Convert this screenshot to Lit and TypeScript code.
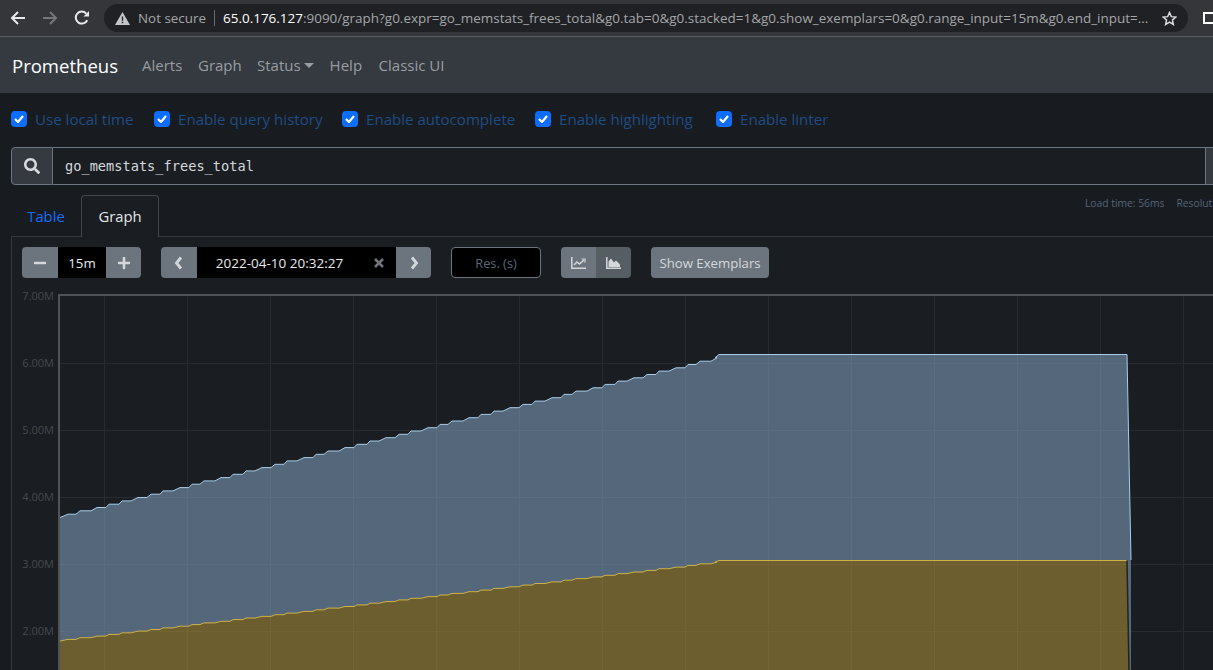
import { LitElement, html, css, svg } from "lit";
import { customElement } from "lit/decorators.js";

const FA = {
  search: ["0 0 512 512", "M505 442.7L405.3 343c-4.5-4.5-10.6-7-17-7H372c27.6-35.3 44-79.7 44-128C416 93.1 322.9 0 208 0S0 93.1 0 208s93.1 208 208 208c48.3 0 92.7-16.4 128-44v16.3c0 6.4 2.5 12.5 7 17l99.7 99.7c9.4 9.4 24.6 9.4 33.9 0l28.3-28.3c9.4-9.4 9.4-24.6.1-34zM208 336c-70.7 0-128-57.2-128-128 0-70.7 57.2-128 128-128 70.7 0 128 57.2 128 128 0 70.7-57.2 128-128 128z"],
  plus: ["0 0 448 512", "M416 208H272V64c0-17.67-14.33-32-32-32h-32c-17.67 0-32 14.33-32 32v144H32c-17.67 0-32 14.33-32 32v32c0 17.67 14.33 32 32 32h144v144c0 17.67 14.33 32 32 32h32c17.67 0 32-14.33 32-32V304h144c17.67 0 32-14.33 32-32v-32c0-17.67-14.33-32-32-32z"],
  minus: ["0 0 448 512", "M416 208H32c-17.67 0-32 14.33-32 32v32c0 17.67 14.33 32 32 32h384c17.67 0 32-14.33 32-32v-32c0-17.67-14.33-32-32-32z"],
};
const fa = (k: keyof typeof FA, s: number) =>
  html`<svg width=${s} height=${s} viewBox=${FA[k][0]} fill="currentColor"><path d=${FA[k][1]}></path></svg>`;
const chevron = (pts: string) =>
  html`<svg width="10" height="14" viewBox="0 0 10 14" fill="none" stroke="currentColor" stroke-width="2.8"><polyline points=${pts}></polyline></svg>`;

// Flat-start positions of each scrape step, following the reference's uneven rhythm.
const INC = [12, 17, 12, 13, 16, 13, 12, 17, 12];
const RAMP = [4, 6, 3, 3, 7, 4, 3, 7, 3];
function stepped(y0: number, y1: number): [number, number][] {
  const xs: number[] = [];
  const rs: number[] = [];
  let x = 68;
  let i = 0;
  while (x < 719) {
    xs.push(x);
    rs.push(RAMP[i % RAMP.length]);
    x += INC[i % INC.length];
    i++;
  }
  const dy = (y1 - y0) / (xs.length + 1);
  const pts: [number, number][] = [[60, y0]];
  xs.forEach((fx, n) => {
    const y = y0 + dy * (n + 1);
    pts.push([fx, y]);
    const next = n + 1 < xs.length ? xs[n + 1] - rs[n] : 719 - 4;
    pts.push([next, y]);
  });
  pts.push([719, y1]);
  return pts;
}
const P = (a: [number, number][]) => a.map((p) => `${p[0].toFixed(1)},${p[1].toFixed(1)}`).join(" ");

const up = stepped(517.5, 354.5);
const low = stepped(641, 560.5);
up.push([1127, 354.5], [1131, 560]);
low.push([1127, 560.5]);
const lowEnd: [number, number][] = [[1131, 765]];
const upperBand = [...up, ...lowEnd, ...[...low].reverse()];
const lowerBand = [...low, ...lowEnd, [60, 765] as [number, number]];

const yTicks: [number, string][] = [
  [363, "6.00M"], [430, "5.00M"], [497, "4.00M"], [564, "3.00M"], [631, "2.00M"],
];
const xTicks = Array.from({ length: 14 }, (_, i) => 104.5 + 83 * i);

const options: [string, number][] = [
  ["Use local time", 143], ["Enable query history", 188], ["Enable autocomplete", 193],
  ["Enable highlighting", 181], ["Enable linter", 0],
];

@customElement("app-root")
export class AppRoot extends LitElement {
  static styles = css`
    :host { display: block; width: 1213px; height: 670px; overflow: hidden; background: #181b20; font-family: "Open Sans", "Noto Sans", sans-serif; color: #d8dadd; }
    .chrome { height: 36px; background: #35363a; border-bottom: 1px solid #5c5d60; display: flex; align-items: center; white-space: nowrap; overflow: hidden; }
    .navbtns { width: 104px; flex: none; display: flex; padding-left: 10px; box-sizing: border-box; gap: 16px; align-items: center; }
    .omni { flex: none; width: 1084px; height: 28px; border-radius: 14px; background: #202124; display: flex; align-items: center; padding-left: 11px; box-sizing: border-box; font-size: 13.4px; color: #a4a6a9; }
    .omni .warn { margin-right: 8px; display: flex; }
    .ns { width: 76px; flex: none; }
    .sep { width: 1px; height: 16px; background: #6a6b6e; margin-right: 8px; flex: none; }
    .url { width: 928px; flex: none; overflow: hidden; font-size: 13.47px; }
    .url b { font-weight: 400; color: #fff; }
    .star { margin-left: 11px; display: flex; }
    .ext { margin-left: 15px; width: 12px; height: 12px; border: 2px solid #fff; box-sizing: border-box; flex: none; }
    nav { height: 56px; background: #343a40; display: flex; align-items: center; padding-left: 12px; }
    .brand { font-size: 18.55px; color: #fff; width: 130px; flex: none; }
    .links { display: flex; font-size: 15px; color: #9a9da0; align-items: center; }
    .links span { flex: none; }
    .caret { width: 0; height: 0; border: 5px solid transparent; border-top-color: #9a9da0; border-bottom: 0; margin-left: 3px; }
    .opts { height: 54px; box-sizing: border-box; padding: 0 0 2px 11px; display: flex; align-items: center; font-size: 15.1px; color: #1e4d84; }
    .opt { display: flex; align-items: center; gap: 8px; flex: none; }
    .cb { width: 16px; height: 16px; background: #0d6efd; border-radius: 4px; display: flex; align-items: center; justify-content: center; flex: none; }
    .query { margin-left: 11px; height: 38px; display: flex; width: 1300px; box-sizing: border-box; }
    .addon { width: 42px; flex: none; background: #343a40; border: 1px solid #6c757d; border-radius: 4px 0 0 4px; box-sizing: border-box; display: flex; align-items: center; justify-content: center; color: #d8dadd; }
    .input { width: 1153px; flex: none; border: 1px solid #6c757d; border-left: 0; box-sizing: border-box; background: #1a1d22; font-family: "DejaVu Sans Mono", monospace; font-size: 13.65px; color: #d5d8dc; display: flex; align-items: center; padding-left: 12px; }
    .tail { flex: 1; background: #343a40; border: 1px solid #6c757d; border-left: 0; }
    .tabrow { height: 41px; margin: 10px 0 0 11px; display: flex; position: relative; width: 1300px; }
    .tab { font-size: 14.8px; display: flex; align-items: center; justify-content: center; box-sizing: border-box; flex: none; }
    .tab.off { width: 70px; color: #0d6efd; }
    .tab.on { width: 78px; color: #e4e6e8; border: 1px solid #43464b; border-bottom: 0; border-radius: 4px 4px 0 0; background: #1a1d22; position: relative; z-index: 1; height: 42px; padding-bottom: 2px; }
    .stats { font-size: 10.3px; color: #566579; display: flex; gap: 12px; position: absolute; left: 1074px; top: 1px; }
    .panel { margin-left: 11px; border: 1px solid #35383d; border-width: 1px 0 0 1px; background: #1a1d22; height: 434px; }
    .controls { height: 53px; box-sizing: border-box; padding: 10px 0 0 10px; display: flex; gap: 20px; font-size: 13.3px; }
    .group { display: flex; height: 31px; flex: none; border-radius: 4px; overflow: hidden; }
    .btn { background: #6c757d; color: #d5d8db; display: flex; align-items: center; justify-content: center; flex: none; }
    .field { background: #000; color: #e8eaed; display: flex; align-items: center; justify-content: center; flex: none; position: relative; }
    .date { width: 199px; padding-right: 34px; box-sizing: border-box; font-size: 13.5px; }
    .clear { position: absolute; left: 176px; top: 10px; color: #70757b; display: flex; }
    .res { width: 90px; height: 31px; background: #000; border: 1px solid #6c757d; border-radius: 4px; box-sizing: border-box; color: #56697c; display: flex; align-items: center; justify-content: center; flex: none; font-size: 12.8px; }
    .btn.dark { background: #565e64; }
    .show { width: 118px; height: 31px; border-radius: 4px; font-size: 13.2px; }
    svg.chart { display: block; }
    .yl { font: 11px "Open Sans", sans-serif; fill: #46494d; }
  `;

  render() {
    return html`
      <div class="chrome">
        <div class="navbtns">
          <svg width="16" height="16" viewBox="0 0 16 16"><path d="M15 8H2.5M8 2L2 8l6 6" fill="none" stroke="#e8eaed" stroke-width="2"></path></svg>
          <svg width="16" height="16" viewBox="0 0 16 16"><path d="M1 8h12.5M8 2l6 6-6 6" fill="none" stroke="#75767a" stroke-width="2"></path></svg>
          <svg width="16" height="16" viewBox="0 0 16 16"><path d="M13.2 10.2A6 6 0 1 1 12.3 3.6" fill="none" stroke="#e8eaed" stroke-width="2"></path><path d="M9.5 6.5H15V1z" fill="#e8eaed"></path></svg>
        </div>
        <div class="omni">
          <span class="warn"><svg width="15" height="13" viewBox="0 0 15 13"><path d="M7.5 0L15 13H0z" fill="#c4c6c9"></path><path d="M6.8 4.5h1.4v4.3H6.8zM6.8 9.8h1.4v1.4H6.8z" fill="#202124"></path></svg></span>
          <span class="ns">Not secure</span><span class="sep"></span>
          <span class="url"><b>65.0.176.127</b>:9090/graph?g0.expr=go_memstats_frees_total&g0.tab=0&g0.stacked=1&g0.show_exemplars=0&g0.range_input=15m&g0.end_input=...</span>
          <span class="star"><svg width="15" height="15" viewBox="0 0 24 24"><path d="M12 2.5l2.9 6.5 7.1.7-5.3 4.8 1.5 7-6.2-3.6-6.2 3.6 1.5-7L2 9.7l7.1-.7z" fill="none" stroke="#dcdde0" stroke-width="2.4"></path></svg></span>
        </div>
        <div class="ext"></div>
      </div>
      <nav>
        <div class="brand">Prometheus</div>
        <div class="links">
          <span style="width:56px">Alerts</span><span style="width:59px">Graph</span>
          <span>Status</span><i class="caret"></i><span style="width:49px;margin-left:16px">Help</span><span>Classic UI</span>
        </div>
      </nav>
      <div class="opts">
        ${options.map(([t, w]) => html`<label class="opt" style=${w ? `width:${w}px` : ""}>
          <span class="cb"><svg width="10" height="8" viewBox="0 0 10 8"><path d="M1 4l3 3 5-6" fill="none" stroke="#fff" stroke-width="2.2"></path></svg></span>${t}</label>`)}
      </div>
      <div class="query">
        <div class="addon">${fa("search", 16)}</div>
        <div class="input">go_memstats_frees_total</div>
        <div class="tail"></div>
      </div>
      <div class="tabrow">
        <div class="tab off">Table</div>
        <div class="tab on">Graph</div>
        <div class="stats"><span>Load time: 56ms</span><span>Resolution: 3s</span></div>
      </div>
      <div class="panel">
        <div class="controls">
          <div class="group">
            <div class="btn" style="width:36px">${fa("minus", 14)}</div>
            <div class="field" style="width:48px">15m</div>
            <div class="btn" style="width:35px">${fa("plus", 14)}</div>
          </div>
          <div class="group">
            <div class="btn" style="width:36px">${chevron("7,1.5 2.5,7 7,12.5")}</div>
            <div class="field date">2022-04-10 20:32:27<span class="clear"><svg width="12" height="12" viewBox="0 0 12 12"><path d="M2 2l8 8M10 2l-8 8" stroke="currentColor" stroke-width="2.6"></path></svg></span></div>
            <div class="btn" style="width:35px">${chevron("3,1.5 7.5,7 3,12.5")}</div>
          </div>
          <div class="res">Res. (s)</div>
          <div class="group">
            <div class="btn" style="width:35px"><svg width="15" height="12" viewBox="0 0 15 12" fill="none" stroke="currentColor" stroke-width="1.5"><path d="M.8 0v11.2H15"></path><path d="M3 8l3-3 2.5 2L13 3"></path><path d="M10.5 2h3.5v3.5" stroke-width="1.2"></path></svg></div>
            <div class="btn dark" style="width:35px"><svg width="15" height="12" viewBox="0 0 15 12"><path d="M.8 0v11.2H15" fill="none" stroke="currentColor" stroke-width="1.5"></path><path d="M2.5 10V4.5L5 1.5l3 4 2-2 4 4V10z" fill="currentColor"></path></svg></div>
          </div>
          <div class="btn show">Show Exemplars</div>
        </div>
        <svg class="chart" width="1201" height="381" viewBox="0 0 1201 381">
          <g transform="translate(-12,-290)">
            ${xTicks.map((x) => svg`<line x1=${x} x2=${x} y1="296" y2="670" stroke="#282c31"></line>`)}
            ${yTicks.map(([y]) => svg`<line x1="60" x2="1213" y1=${y + 0.5} y2=${y + 0.5} stroke="#282c31"></line>`)}
            <polygon points=${P(upperBand)} fill="#7d9bb7" fill-opacity="0.6"></polygon>
            <polygon points=${P(lowerBand)} fill="#a48a37" fill-opacity="0.6"></polygon>
            <polyline points=${P(up)} fill="none" stroke="#a6cdea" stroke-width="1"></polyline>
            <polyline points=${P(low)} fill="none" stroke="#d0b24a" stroke-width="1"></polyline>
            <line x1="1127" y1="560.5" x2="1129" y2="670" stroke="#24241f" stroke-width="1.5"></line>
            <line x1="58" x2="1213" y1="295" y2="295" stroke="#505357" stroke-width="2"></line>
            <line x1="59" x2="59" y1="294" y2="670" stroke="#505357" stroke-width="2"></line>
            <text class="yl" x="54" y="300" text-anchor="end">7.00M</text>
            ${yTicks.map(([y, t]) => svg`<text class="yl" x="54" y=${y + 4} text-anchor="end">${t}</text>`)}
          </g>
        </svg>
      </div>
    `;
  }
}
